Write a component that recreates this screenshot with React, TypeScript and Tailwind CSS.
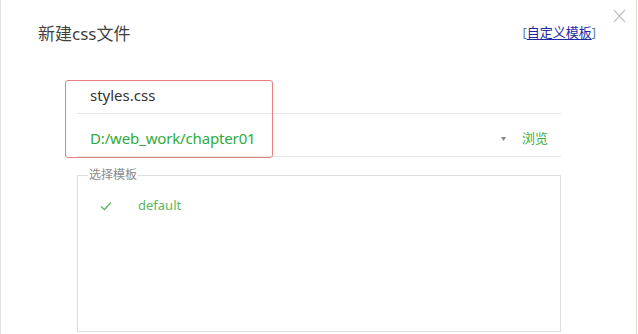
import React from "react";

const FONT = "font-['Noto_Sans','Noto_Sans_CJK_SC',sans-serif]";

export default function App() {
    return (
        <div className={`w-[638px] h-[334px] bg-white ${FONT} overflow-hidden`}>
            <div className="relative w-[637px] h-[334px] border-l border-r border-l-[#e3e3e3] border-r-[#dcdcd2]">
                {/* close */}
                <svg className="absolute left-[612px] top-[9px]" width="13" height="14" viewBox="0 0 13 14">
                    <path d="M1 1 L12 13 M12 1 L1 13" stroke="#c4c4c4" strokeWidth="1.2" fill="none" />
                </svg>

                <div className="flex items-center justify-between pl-[37px] pr-[40px] pt-[21px]">
                    <h1 className="text-[17px] leading-[26px] text-[#3f3f3f]">新建css文件</h1>
                    <a className="text-[13px] leading-[20px] text-[#1f2a9e] mt-[-4px]">
                        <span className="text-[#5a7fb0]">[</span>
                        <span className="underline underline-offset-2">自定义模板</span>
                        <span className="text-[#5a7fb0]">]</span>
                    </a>
                </div>

                <div className="ml-[76px] w-[484px] mt-[24px]">
                    <div className="h-[43px] border-b border-[#e6e6e6] flex items-center pl-[13px] text-[15px] text-[#333] pt-[6px]">
                        styles.css
                    </div>
                    <div className="h-[43px] border-b border-[#e6e6e6] flex items-center pl-[13px] pr-[13px] pt-[7px]">
                        <span className="text-[15px] tracking-[-0.15px] text-[#2eab3a] flex-1">D:/web_work/chapter01</span>
                        <svg className="mr-[16px]" width="5" height="4" viewBox="0 0 5 4">
                            <path d="M0 0 L5 0 L2.5 4 Z" fill="#888" />
                        </svg>
                        <span className="text-[13px] text-[#3aae44]">浏览</span>
                    </div>

                    <fieldset className="mt-[10px] h-[165px] border border-[#dedede] pl-[10px] pr-[10px]">
                        <legend className="px-[1px] text-[12px] leading-[16px] text-[#8a8a8a]">选择模板</legend>
                        <div className="flex items-center mt-[13px] pl-[12px]">
                            <svg width="12" height="10" viewBox="0 0 12 10">
                                <path d="M1 5.5 L4.5 8.5 L11 1.5" stroke="#5cb85c" strokeWidth="1.3" fill="none" />
                            </svg>
                            <span className="ml-[26px] text-[13px] text-[#5cb85c]">default</span>
                        </div>
                    </fieldset>
                </div>

                {/* highlight annotation */}
                <div className="absolute left-[64px] top-[80px] w-[208px] h-[78px] border-[1.5px] border-[#e98080] rounded-[3px]" />
            </div>
        </div>
    );
}
